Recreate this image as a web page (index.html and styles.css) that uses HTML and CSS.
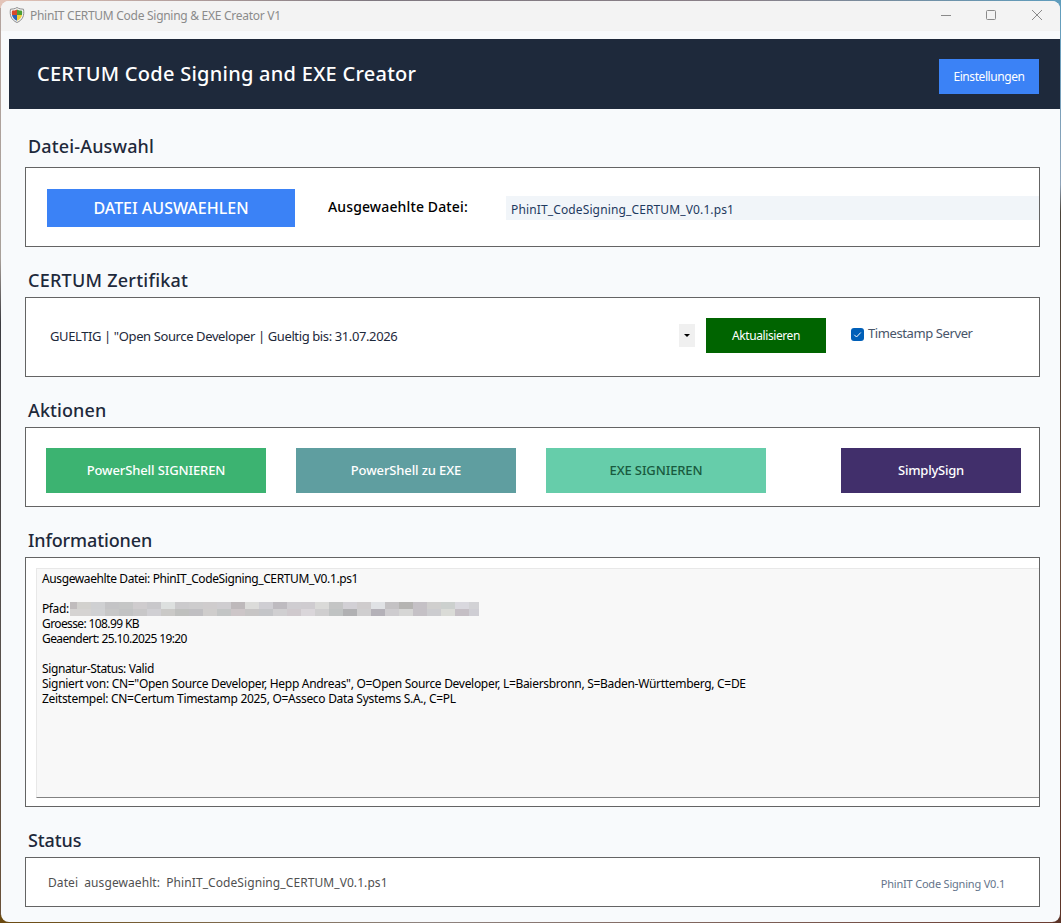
FILE: index.html
```html
<!DOCTYPE html>
<html lang="de">
<head>
<meta charset="utf-8">
<title>PhinIT CERTUM Code Signing &amp; EXE Creator V1</title>
<link rel="stylesheet" href="styles.css">
</head>
<body>
<div class="window">
  <div class="titlebar">
    <svg class="app-icon" width="16" height="16" viewBox="0 0 16 16">
      <path d="M8 .5C6 2 3.500 2 1.500 2.200C.5 8 2 13 8 15.500C14 13 15.500 8 14.500 2.200C12.500 2 10 2 8 .5Z" fill="#f4f4f4" stroke="#8c8c8c"/>
      <path d="M8 2.500C6.500 3.400 5 3.600 3 3.700C2.700 5.500 2.800 6.800 3 8H8Z" fill="#d84a2b"/>
      <path d="M8 2.500C9.500 3.400 11 3.600 13 3.700C13.300 5.500 13.200 6.800 13 8H8Z" fill="#4c9e35"/>
      <path d="M3 8H8V13.800C5 12.500 3.500 10.500 3 8Z" fill="#2d62b8"/>
      <path d="M13 8H8V13.800C11 12.500 12.500 10.500 13 8Z" fill="#f3cf3a"/>
    </svg>
    <span class="title-text">PhinIT CERTUM Code Signing &amp; EXE Creator V1</span>
    <div class="controls">
      <svg width="12" height="12" viewBox="0 0 12 12"><path d="M1 6.500H11"/></svg>
      <svg width="12" height="12" viewBox="0 0 12 12"><rect x="1.500" y="1.500" width="9" height="9" rx="1"/></svg>
      <svg width="12" height="12" viewBox="0 0 12 12"><path d="M1 1L11 11M11 1L1 11"/></svg>
    </div>
  </div>
  <header class="header">
    <h1><span class="t-h1">CERTUM Code Signing and EXE Creator</span></h1>
    <button class="btn settings"><span class="t-set">Einstellungen</span></button>
  </header>
  <main>
    <h2 class="first"><span class="t-s1">Datei-Auswahl</span></h2>
    <section class="panel file">
      <button class="btn choose"><span>DATEI AUSWAEHLEN</span></button>
      <label class="file-label"><span class="t-flabel">Ausgewaehlte Datei:</span></label>
      <div class="file-field"><span class="t-field">PhinIT_CodeSigning_CERTUM_V0.1.ps1</span></div>
    </section>
    <h2><span class="t-s2">CERTUM Zertifikat</span></h2>
    <section class="panel cert">
      <div class="select"><span class="t-cert">GUELTIG | "Open Source Developer | Gueltig bis: 31.07.2026</span><span class="arrow"><svg width="6" height="3" viewBox="0 0 6 3"><path d="M0 0H6L3 3Z"/></svg></span></div>
      <button class="btn refresh"><span class="t-ref">Aktualisieren</span></button>
      <label class="check"><span class="box"><svg width="13" height="13" viewBox="0 0 13 13"><path d="M3.300 6.800L5.500 9L9.800 4.500"/></svg></span><span class="t-time">Timestamp Server</span></label>
    </section>
    <h2><span class="t-s3">Aktionen</span></h2>
    <section class="panel actions">
      <button class="btn sign"><span>PowerShell SIGNIEREN</span></button>
      <button class="btn toexe"><span>PowerShell zu EXE</span></button>
      <button class="btn exesign"><span>EXE SIGNIEREN</span></button>
      <button class="btn simply"><span class="t-a4">SimplySign</span></button>
    </section>
    <h2><span class="t-s4">Informationen</span></h2>
    <section class="panel info">
      <div class="log">
        <p><span class="t-l1">Ausgewaehlte Datei: PhinIT_CodeSigning_CERTUM_V0.1.ps1</span></p>
        <p></p>
        <p class="path"><span class="t-l2">Pfad:</span><svg class="mosaic" width="409" height="14" viewBox="0 0 409 14" shape-rendering="crispEdges">
          <path fill="#c0bcbd" d="M0 0h7v7H0z"/><path fill="#d2d1ce" d="M7 0h14v7H7z"/><path fill="#cfd0d2" d="M21 0h14v7H21z"/><path fill="#c4c4c6" d="M35 0h14v7H35z"/><path fill="#c5c6c6" d="M49 0h14v7H49z"/><path fill="#cfccce" d="M63 0h14v7H63z"/><path fill="#c9c8cb" d="M77 0h14v7H77z"/><path fill="#dde0df" d="M91 0h14v7H91z"/><path fill="#cbcacc" d="M105 0h14v7H105z"/><path fill="#cdcccd" d="M119 0h14v7H119z"/><path fill="#cfcccd" d="M133 0h14v7H133z"/><path fill="#cfcdd0" d="M147 0h14v7H147z"/><path fill="#beb9bb" d="M161 0h14v7H161z"/><path fill="#dcdcda" d="M175 0h14v7H175z"/><path fill="#cfced3" d="M189 0h14v7H189z"/><path fill="#bebbc0" d="M203 0h14v7H203z"/><path fill="#cfcdd1" d="M217 0h14v7H217z"/><path fill="#cfccd0" d="M231 0h14v7H231z"/><path fill="#dadad8" d="M245 0h14v7H245z"/><path fill="#c4c5c5" d="M259 0h14v7H259z"/><path fill="#d2d0d5" d="M273 0h14v7H273z"/><path fill="#cfcccd" d="M287 0h14v7H287z"/><path fill="#e0e2e5" d="M301 0h14v7H301z"/><path fill="#c4c2c4" d="M315 0h14v7H315z"/><path fill="#b5b4b2" d="M329 0h14v7H329z"/><path fill="#c5c1c6" d="M343 0h14v7H343z"/><path fill="#d0cfce" d="M357 0h14v7H357z"/><path fill="#ccd0ce" d="M371 0h14v7H371z"/><path fill="#d9d8de" d="M385 0h14v7H385z"/><path fill="#d2d2d5" d="M399 0h10v7H399z"/>
          <path fill="#d5d3d2" d="M0 7h21v7H0z"/><path fill="#d0d1d3" d="M21 7h14v7H21z"/><path fill="#c7c7c7" d="M35 7h14v7H35z"/><path fill="#c2c3c4" d="M49 7h14v7H49z"/><path fill="#c8c7c8" d="M63 7h14v7H63z"/><path fill="#d0cfd3" d="M77 7h14v7H77z"/><path fill="#cac9c7" d="M91 7h14v7H91z"/><path fill="#bfc0be" d="M105 7h14v7H105z"/><path fill="#c0bfc2" d="M119 7h14v7H119z"/><path fill="#cfcdcc" d="M133 7h14v7H133z"/><path fill="#c3c5c5" d="M147 7h14v7H147z"/><path fill="#cdc6c8" d="M161 7h14v7H161z"/><path fill="#c7c5c5" d="M175 7h14v7H175z"/><path fill="#c4c5c8" d="M189 7h14v7H189z"/><path fill="#d0cfd1" d="M203 7h14v7H203z"/><path fill="#cfc9cd" d="M217 7h14v7H217z"/><path fill="#dad6da" d="M231 7h14v7H231z"/><path fill="#cfcecf" d="M245 7h14v7H245z"/><path fill="#c0c3c3" d="M259 7h14v7H259z"/><path fill="#b1b1b3" d="M273 7h14v7H273z"/><path fill="#cfcecf" d="M287 7h14v7H287z"/><path fill="#b4b1b8" d="M301 7h14v7H301z"/><path fill="#cecccf" d="M315 7h14v7H315z"/><path fill="#d6d6d5" d="M329 7h14v7H329z"/><path fill="#c5c1c6" d="M343 7h14v7H343z"/><path fill="#cccccf" d="M357 7h14v7H357z"/><path fill="#dadbd7" d="M371 7h14v7H371z"/><path fill="#c5bfc5" d="M385 7h14v7H385z"/><path fill="#cfced4" d="M399 7h10v7H399z"/>
        </svg></p>
        <p><span class="t-l3">Groesse: 108.99 KB</span></p>
        <p><span class="t-l3">Geaendert: 25.10.2025 19:20</span></p>
        <p></p>
        <p><span class="t-l1">Signatur-Status: Valid</span></p>
        <p><span class="t-l6">Signiert von: CN="Open Source Developer, Hepp Andreas", O=Open Source Developer, L=Baiersbronn, S=Baden-Württemberg, C=DE</span></p>
        <p><span class="t-l7">Zeitstempel: CN=Certum Timestamp 2025, O=Asseco Data Systems S.A., C=PL</span></p>
      </div>
    </section>
    <h2><span class="t-s5">Status</span></h2>
    <section class="panel status">
      <span class="status-text">Datei ausgewaehlt: PhinIT_CodeSigning_CERTUM_V0.1.ps1</span>
      <span class="version">PhinIT Code Signing V0.1</span>
    </section>
  </main>
</div>
</body>
</html>
```
FILE: styles.css
```css
* { box-sizing: border-box; }
body {
  margin: 0;
  height: 923px;
  overflow: hidden;
  padding: 1px;
  font-family: "Noto Sans", "Open Sans", sans-serif;
  font-size: 12px;
  background:
    linear-gradient(#5f9dbd, #8fa3b8 20%, #4a4238 23%, #6b5040 60%, #5c3428) right / 8px 100% no-repeat,
    linear-gradient(90deg, #e3c4b8, #7f7880 35%, #8a8088 70%, #5f9dbd) top / 100% 8px no-repeat,
    linear-gradient(90deg, #6b4a10, #8f8480 40%, #6b3c30) bottom / 100% 8px no-repeat,
    linear-gradient(#b4a49e, #a8a09a 28%, #3c3b40 35%, #57504c 70%, #6a5038);
}
span { white-space: nowrap; }
.window { height: 921px; background: #f8fafc; border-radius: 8px; overflow: hidden; }
.titlebar { height: 30px; background: #f3f3f3; display: flex; align-items: center; padding: 0 0 2px 8px; color: #8b8b8b; }
.title-text { margin-left: 5px; letter-spacing: -.28px; }
.controls { margin-left: auto; display: flex; gap: 33px; padding-right: 17px; }
.controls svg { fill: none; stroke: #8a8a8a; stroke-width: 1; }
.controls svg:not(:last-child) { margin-right: 1px; margin-left: -1px; }
.header { margin: 8px 0 0 8px; height: 70px; background: #1e293b; display: flex; justify-content: space-between; padding: 6px 21px 0 28px; align-items: flex-start; color: #fff; }
h1 { margin: 0; font-size: 20px; font-weight: 500; line-height: 58px; }
.t-h1 { letter-spacing: .26px; }
.btn { border: 0; border-radius: 0; padding: 0; font-family: inherit; font-size: 12px; color: #fff; display: flex; align-items: center; justify-content: center; flex: none; }
.settings { width: 100px; height: 35px; background: #3b82f6; margin-top: 14px; }
.t-set, .t-ref { letter-spacing: -.42px; }
main { padding: 0 20px 0 24px; }
h2 { margin: 0; height: 50px; padding: 19px 0 0 3px; font-size: 18px; font-weight: 500; line-height: 28px; color: #1e293b; }
h2.first { height: 58px; padding-top: 23px; }
.t-s1 { letter-spacing: .15px; }
.t-s2 { letter-spacing: .25px; }
.t-s3 { letter-spacing: .1px; }
.t-s4, .t-s5 { letter-spacing: -.12px; }
.panel { border: 1px solid #646464; background: #fff; display: flex; height: 80px; }
.file { padding: 21px 0 0 21px; }
.choose { width: 248px; height: 38px; background: #3b82f6; font-size: 16px; font-weight: 500; padding-bottom: 1px; }
.file-label { width: 178px; margin-left: 33px; font-size: 14px; font-weight: 500; line-height: 36px; color: #000; }
.t-flabel { letter-spacing: .13px; }
.file-field { flex: 1; height: 24px; margin-top: 7px; padding-left: 5px; background: #f1f5f9; color: #1e3a5f; line-height: 27px; overflow: hidden; }
.t-field { letter-spacing: .13px; }
.cert { padding: 20px 0 0 24px; }
.select { width: 645px; height: 23px; margin-top: 6px; display: flex; justify-content: space-between; line-height: 25px; font-size: 13px; color: #1e293b; }
.t-cert { letter-spacing: -.39px; }
.arrow { width: 16px; background: #f0f0f0; display: flex; align-items: center; justify-content: center; }
.refresh { width: 120px; height: 35px; background: #006400; margin-left: 11px; }
.check { display: flex; margin-left: 25px; height: 32px; align-items: center; color: #475569; font-size: 13px; }
.t-time { letter-spacing: -.4px; padding-bottom: 2px; }
.box { width: 13px; height: 13px; border-radius: 3px; background: #005fb8; margin-right: 4px; display: flex; }
.box svg { fill: none; stroke: #fff; }
.actions { padding: 20px 18px 0 20px; gap: 30px; }
.actions .btn { width: 220px; height: 45px; font-size: 13px; font-weight: 500; letter-spacing: -.12px; padding-bottom: 2px; }
.sign { background: #3cb371; }
.toexe { background: #5f9ea0; }
.actions .exesign { background: #66cdaa; color: #195a3e; }
.actions .simply { background: #412f6b; width: 180px; margin-left: auto; }
.t-a4 { letter-spacing: -.25px; }
.info { height: 250px; padding: 10px 0 8px 10px; }
.log { flex: 1; background: #f8f8f8; border: 1px solid #e8e8e8; border-right: 0; border-bottom-color: #828282; padding: 2px 0 0 5px; color: #000; overflow: hidden; }
.log p { margin: 0; height: 15px; line-height: 15px; display: flex; }
.t-l1 { letter-spacing: -.39px; }
.t-l2 { letter-spacing: -.4px; width: 28px; }
.t-l3 { letter-spacing: -.61px; }
.t-l6 { letter-spacing: -.3px; }
.t-l7 { letter-spacing: -.29px; }
.mosaic { margin-top: 1px; flex: none; }
.status { height: 50px; padding: 0 34px 0 22px; justify-content: space-between; align-items: center; }
.status-text { color: #505050; word-spacing: 3px; letter-spacing: .08px; }
.version { font-size: 11px; color: #64748b; padding-top: 3px; letter-spacing: -.2px; }
```
